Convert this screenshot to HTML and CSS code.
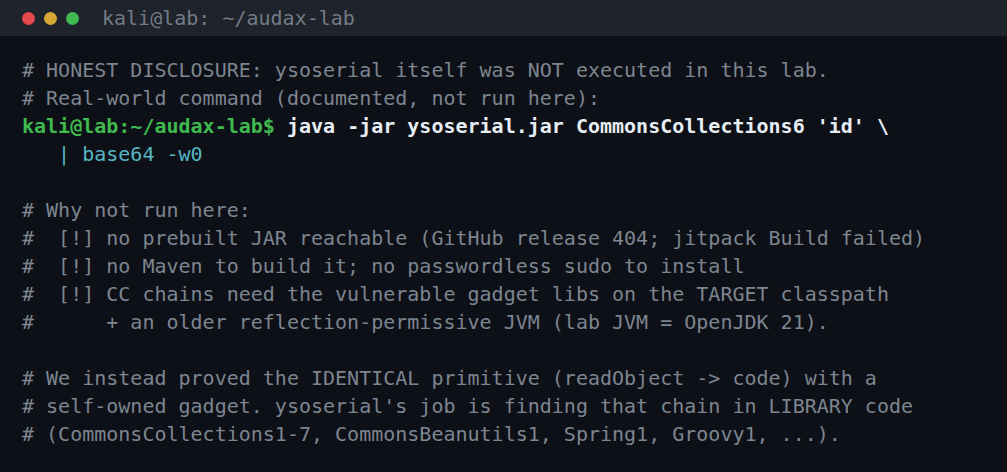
FILE: index.html
```html
<!DOCTYPE html>
<html>
<head>
<meta charset="utf-8">
<link rel="stylesheet" href="styles.css">
</head>
<body>
<div class="term">
  <div class="titlebar">
    <div class="dots">
      <span class="dot red"></span>
      <span class="dot yellow"></span>
      <span class="dot green"></span>
    </div>
    <span class="title">kali@lab: ~/audax-lab</span>
  </div>
  <pre class="body"><span class="c"># HONEST DISCLOSURE: ysoserial itself was NOT executed in this lab.</span>
<span class="c"># Real-world command (documented, not run here):</span>
<span class="p">kali@lab:~/audax-lab$</span> <span class="cmd">java -jar ysoserial.jar CommonsCollections6 'id' \</span>
<span class="cy">   | base64 -w0</span>

<span class="c"># Why not run here:</span>
<span class="c">#  [!] no prebuilt JAR reachable (GitHub release 404; jitpack Build failed)</span>
<span class="c">#  [!] no Maven to build it; no passwordless sudo to install</span>
<span class="c">#  [!] CC chains need the vulnerable gadget libs on the TARGET classpath</span>
<span class="c">#      + an older reflection-permissive JVM (lab JVM = OpenJDK 21).</span>

<span class="c"># We instead proved the IDENTICAL primitive (readObject -&gt; code) with a</span>
<span class="c"># self-owned gadget. ysoserial's job is finding that chain in LIBRARY code</span>
<span class="c"># (CommonsCollections1-7, CommonsBeanutils1, Spring1, Groovy1, ...).</span></pre>
</div>
</body>
</html>
```

FILE: styles.css
```css
html, body {
  margin: 0;
  padding: 0;
  background: #0d1117;
}
.term {
  width: 1007px;
  height: 472px;
  background: #0d1017;
  font-family: "DejaVu Sans Mono", monospace;
  overflow: hidden;
}
.titlebar {
  height: 36px;
  background: #1f232b;
  display: flex;
  align-items: center;
  padding-left: 22px;
  box-sizing: border-box;
}
.dots {
  display: flex;
  gap: 9px;
}
.dot {
  width: 13px;
  height: 13px;
  border-radius: 50%;
  display: block;
}
.red { background: #e5484d; }
.yellow { background: #d6a733; }
.green { background: #3fb950; }
.title {
  margin-left: 23px;
  font-size: 20px;
  color: #737b86;
}
.body {
  margin: 0;
  padding: 20px 0 0 22px;
  font-family: "DejaVu Sans Mono", monospace;
  font-size: 20px;
  line-height: 28px;
  white-space: pre;
}
.c { color: #7d8590; }
.p { color: #3fb950; font-weight: bold; }
.cmd { color: #e6edf3; font-weight: bold; }
.cy { color: #56b6c2; }
```
